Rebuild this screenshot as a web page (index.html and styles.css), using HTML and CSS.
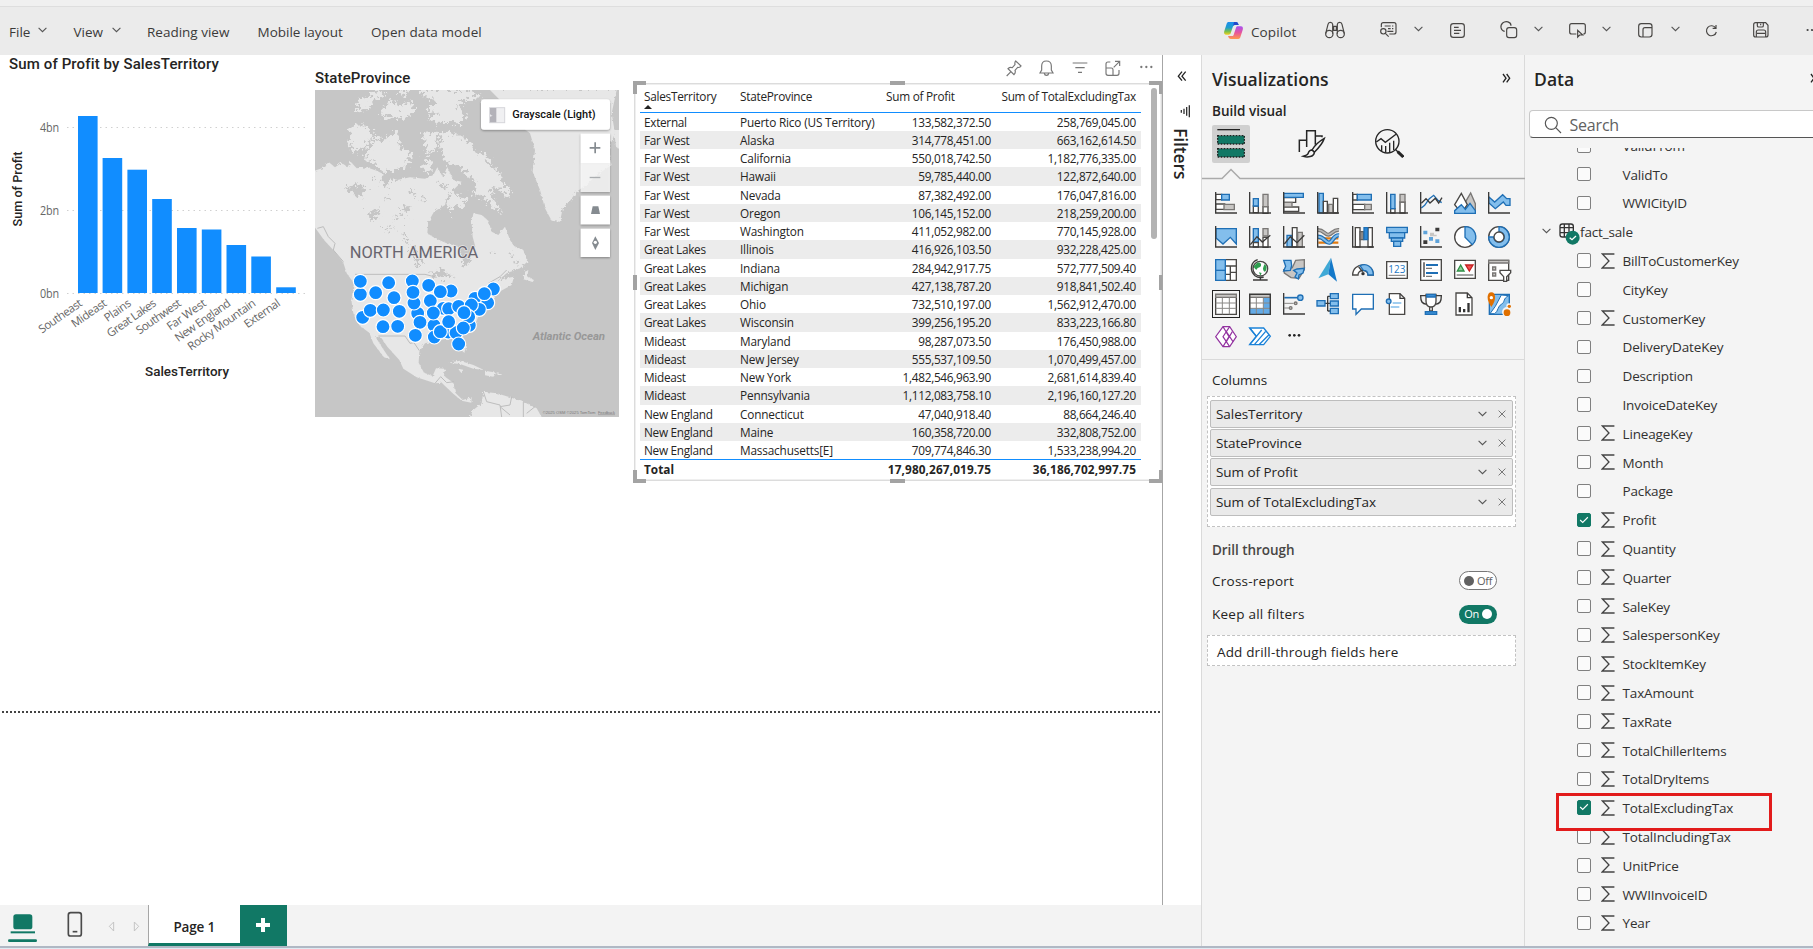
FILE: index.html
```html
<!DOCTYPE html>
<html lang="en">
<head>
<meta charset="utf-8">
<title>Report editor</title>
<link rel="stylesheet" href="styles.css">
</head>
<body>
<svg class="defs" width="0" height="0" aria-hidden="true">
  <symbol id="chev" viewBox="0 0 9 6"><path d="M.6.8 4.5 4.7 8.4.8" fill="none" stroke="#555" stroke-width="1.1"/></symbol>
  <symbol id="close" viewBox="0 0 8 8"><path d="M.6.6 7.4 7.4M7.4.6.6 7.4" stroke="#777" stroke-width="1" fill="none"/></symbol>
  <symbol id="sigma" viewBox="0 0 14 16"><path d="M13.4 1H1.4L8 8 1.2 15h12.4" fill="none" stroke="#444" stroke-width="1.3"/></symbol>
  <symbol id="tick" viewBox="0 0 14 14"><path d="M2.5 7 5.5 9.8 11.5 3.8" fill="none" stroke="#fff" stroke-width="1.3"/></symbol>
</svg>

<header class="toolbar">
  <nav class="menus">
    <span class="m-file">File</span><svg class="chev"><use href="#chev"/></svg>
    <span class="m-view">View</span><svg class="chev"><use href="#chev"/></svg>
    <span class="m-read">Reading view</span>
    <span class="m-mobile">Mobile layout</span>
    <span class="m-model">Open data model</span>
  </nav>
  <div class="tools">
    <svg width="19" height="19" viewBox="0 0 57 57">
      <defs>
        <linearGradient id="cpA" x1="0" y1="0" x2="0" y2="1"><stop offset="0" stop-color="#1b8df0"/><stop offset=".45" stop-color="#1f9ecb"/><stop offset=".75" stop-color="#7cc04b"/><stop offset="1" stop-color="#f3d020"/></linearGradient>
        <linearGradient id="cpB" x1="0" y1="0" x2="0" y2="1"><stop offset="0" stop-color="#a850f0"/><stop offset=".5" stop-color="#e8559c"/><stop offset="1" stop-color="#ff9a4d"/></linearGradient>
      </defs>
      <path d="M14 3h22c5 0 6 3 8 9H33c-4 0-6 3-7 7l-6 18c-1 3-3 4-6 4H6C1 41-1 36 1 30L8 8c1-3 3-5 6-5z" fill="url(#cpA)"/>
      <path d="M43 54H21c-5 0-7-3-9-9h12c4 0 5-3 6-7l6-18c1-3 3-4 6-4h9c5 0 7 5 5 11l-7 22c-1 3-3 5-6 5z" fill="url(#cpB)"/>
      <path d="M30 3h6c5 0 6 3 8 9H33c-3 0-5 1-6 4z" fill="#2447c9"/>
    </svg>
    <span class="copilot">Copilot</span>
    <svg class="ln t-bino" width="20" height="18" viewBox="0 0 60 54"><circle cx="13" cy="39" r="11"/><circle cx="47" cy="39" r="11"/><path d="M2 38 9 10c1-8 13-8 14 0v28M58 38 51 10c-1-8-13-8-14 0v28M23 16h14M23 28h14M26 17v10M34 17v10"/></svg>
    <svg class="ln t-comment" width="17" height="16" viewBox="0 0 51 48"><path d="M4 16V8c0-4 2-6 6-6h32c4 0 6 2 6 6v22c0 4-2 6-6 6H28M14 12h18M36 12h4M24 20h8M36 20h4M22 28h18"/><circle cx="10" cy="28" r="8"/><path d="M16 34l10 10"/></svg>
    <svg class="chev t-c1"><use href="#chev"/></svg>
    <svg class="ln t-note" width="15" height="15" viewBox="0 0 45 45"><rect x="2" y="2" width="41" height="41" rx="8"/><path d="M12 13h14M12 22h21M12 31h16"/></svg>
    <svg class="ln t-shapes" width="18" height="18" viewBox="0 0 54 54"><path d="M14 31C2 29-1 14 8 6c9-8 25-4 25 8"/><rect x="20" y="20" width="30" height="30" rx="7"/></svg>
    <svg class="chev t-c2"><use href="#chev"/></svg>
    <svg class="ln t-cursor" width="17" height="15" viewBox="0 0 51 45"><path d="M22 33H8c-4 0-6-2-6-6V8c0-4 2-6 6-6h35c4 0 6 2 6 6v19c0 4-2 6-6 6M26 22v20l6-6h9z"/></svg>
    <svg class="chev t-c3"><use href="#chev"/></svg>
    <svg class="ln t-layout" width="15" height="15" viewBox="0 0 45 45"><rect x="2" y="2" width="40" height="40" rx="8"/><path d="M15 42V20c0-4 2-6 6-6h21"/></svg>
    <svg class="chev t-c4"><use href="#chev"/></svg>
    <svg class="ln t-refresh" width="12" height="13" viewBox="0 0 36 39"><path d="M32 12A15 15 0 1 0 34 24M33 3v10H23"/></svg>
    <svg class="ln t-save" width="16" height="16" viewBox="0 0 48 48"><path d="M8 2h30l7 8v29c0 4-2 6-6 6H8c-4 0-6-2-6-6V8c0-4 2-6 6-6zM13 2v9c0 3 1 4 4 4h10c3 0 4-1 4-4V2M10 45V30c0-4 2-6 6-6h16c4 0 6 2 6 6v15M12 34h24M23 5v5"/></svg>
    <svg class="t-dots" width="14" height="4" viewBox="0 0 14 4"><circle cx="1.6" cy="2" r="1.1"/><circle cx="6" cy="2" r="1.1"/><circle cx="10.4" cy="2" r="1.1"/></svg>
  </div>
</header>

<main class="work">
  <section class="stage">
    <div class="canvas">
      <div class="bar-visual">
        <h3 class="din t-bar">Sum of Profit by SalesTerritory</h3>
        <svg class="barchart" width="312" height="320" viewBox="0 74 312 320">
          <g stroke="#d0d0d0" stroke-width="1" stroke-dasharray="1.5 4"><path d="M67 127.5H306M67 210.5H306M67 293.5H306"/></g>
          <g fill="#118dff">
            <rect x="78" y="116" width="19.6" height="177"/><rect x="102.6" y="158" width="19.6" height="135"/><rect x="127.4" y="169.7" width="19.6" height="123.3"/><rect x="152.2" y="199" width="19.6" height="94"/><rect x="177" y="228" width="19.6" height="65"/><rect x="201.8" y="229.5" width="19.6" height="63.5"/><rect x="226.5" y="245" width="19.6" height="48"/><rect x="251.3" y="256.5" width="19.6" height="36.5"/><rect x="276.2" y="287.3" width="19.6" height="5.7"/>
          </g>
          <g class="tick" text-anchor="end"><text x="59" y="131.500" textLength="19" lengthAdjust="spacingAndGlyphs">4bn</text><text x="59" y="214.500" textLength="19" lengthAdjust="spacingAndGlyphs">2bn</text><text x="59" y="297.500" textLength="19" lengthAdjust="spacingAndGlyphs">0bn</text></g>
          <g class="cat" text-anchor="end">
            <text transform="translate(83 305) rotate(-35)" textLength="50">Southeast</text>
            <text transform="translate(107.500 305) rotate(-35)" textLength="40">Mideast</text>
            <text transform="translate(132 305) rotate(-35)" textLength="30">Plains</text>
            <text transform="translate(157 305) rotate(-35)" textLength="57">Great Lakes</text>
            <text transform="translate(182 305) rotate(-35)" textLength="52">Southwest</text>
            <text transform="translate(207 305) rotate(-35)" textLength="45">Far West</text>
            <text transform="translate(231.500 305) rotate(-35)" textLength="65">New England</text>
            <text transform="translate(256.500 305) rotate(-35)" textLength="80">Rocky Mountain</text>
            <text transform="translate(281 305) rotate(-35)" textLength="41">External</text>
          </g>
          <text class="axis" transform="translate(21.500 226.500) rotate(-90)" textLength="75" lengthAdjust="spacingAndGlyphs">Sum of Profit</text>
          <text class="axis" x="145" y="376" textLength="84" lengthAdjust="spacingAndGlyphs">SalesTerritory</text>
        </svg>
      </div>

      <div class="map-visual">
        <h3 class="din t-map">StateProvince</h3>
        <svg class="map" width="304" height="327" viewBox="15 30 912 981">
          <defs>
            <filter id="rough" x="-5%" y="-5%" width="110%" height="110%"><feTurbulence type="fractalNoise" baseFrequency=".12" numOctaves="3" seed="4"/><feDisplacementMap in="SourceGraphic" scale="11"/></filter>
            <filter id="rougher" x="-5%" y="-5%" width="110%" height="110%"><feTurbulence type="fractalNoise" baseFrequency=".09" numOctaves="3" seed="9" result="n"/><feDisplacementMap in="SourceGraphic" in2="n" scale="44" xChannelSelector="R" yChannelSelector="G"/></filter>
            <filter id="soft" x="-10%" y="-20%" width="120%" height="150%"><feDropShadow dx="0" dy="3" stdDeviation="3" flood-opacity=".35"/></filter>
          </defs>
          <rect x="15" y="30" width="912" height="981" fill="#c6c6c6"/>
          <g fill="#e7e7e7" filter="url(#rough)">
            <path d="M5 275 45 262 55 245 75 262 95 248 112 262 122 245 140 265 170 262 200 272 232 288 262 300 300 292 345 296 370 285 382 262 398 290 412 262 430 300 455 305 430 330 412 345 405 375 372 395 355 425 352 460 375 475 410 490 445 500 455 530 465 556 478 545 480 515 496 500 488 470 485 430 490 400 515 405 535 422 545 455 565 465 585 440 600 480 612 498 640 510 652 545 630 565 590 580 560 605 585 595 612 590 605 615 560 640 525 680 505 710 490 745 458 765 468 800 462 822 448 800 436 782 420 775 380 782 345 790 328 815 326 848 342 878 368 888 378 865 405 866 402 888 430 908 436 938 458 960 485 952 484 968 455 962 428 940 395 908 375 910 320 892 280 866 268 840 232 800 215 775 195 768 215 800 240 838 222 832 190 790 178 758 150 738 130 700 124 660 132 610 110 580 100 548 72 512 42 480 22 452 5 430z"/>
            <path d="M520 935 560 940 600 952 640 965 680 985 700 1020 475 1020 490 990 515 970z"/>
            <path d="M415 848 450 842 490 855 522 870 490 866 450 852zM525 872 560 878 550 890 525 886zM445 866l18 4-12 6zM560 880l18 2-12 5z"/>
            <path d="M540 30 920 30 905 100 915 160 895 210 905 255 860 285 835 310 800 335 780 362 758 385 750 425 725 422 705 385 690 330 668 275 675 210 660 160 620 130 590 80 560 50z"/>
            <path d="M645 575 655 570 652 590 672 600 668 606 640 598zM912 150l20 0 0 60-14-10z"/>
          </g>
          <g fill="#e7e7e7" filter="url(#rougher)">
            <path d="M122 138 158 136 190 158 185 178 152 205 138 222 118 200z"/>
            <path d="M170 210 188 190 182 175 220 180 262 150 272 200 305 220 290 262 250 268 232 292 190 250 165 238z"/>
            <path d="M388 160 420 155 450 170 480 185 492 215 530 225 545 258 572 280 570 300 606 330 590 350 560 320 535 330 560 365 576 400 545 380 520 350 485 340 500 305 470 285 440 250 410 255 395 215z"/>
            <path d="M330 30 470 30 520 52 470 60 440 78 465 105 455 130 380 128 350 118 390 98 350 92 380 60 340 52z"/>
            <path d="M135 92 150 60 185 45 205 30 225 48 190 60 180 85zM215 80 250 60 262 85 300 62 315 92 280 118 240 108 218 118z"/>
            <path d="M335 160 378 155 382 205 352 222zM345 240 365 235 365 280 338 270zM262 30l35 0-8 22zM408 345 438 338 470 360 460 380 432 378 418 405z"/>
          </g>
          <g fill="#c6c6c6" filter="url(#rougher)">
            <path d="M105 325 130 312 168 322 160 345 142 352 118 335zM170 398 215 385 205 402 190 420zM225 270 262 285 232 320 210 300zM270 390l30-12 4 6-28 14zM215 440l45 10-40-2zM285 460l12 28-6 4-12-26zM310 495l26 62-12 4-24-56zM355 580l36-12 40 20-38 6zM452 520l22 12-2 26-14-6zM545 515l14 2-6 10zM595 520l20 4-14 8zM610 545l18-4-6 10zM300 330l22 10-14 6zM330 360l20-6-4 14zM385 300l30 20-20 4zM225 350l14 4-8 8zM250 415l20-4-8 10zM180 300l10-8 6 8zM290 420l12-4-2 12z"/>
          </g>
          <g fill="none" stroke="#bdbdbd" stroke-width="3">
            <path d="M135 583H345L380 592M205 768H285L300 790 312 788 328 812M22 445 40 440 55 470 75 490 70 510 100 545M535 610 570 590 590 570M375 910 392 890 410 908 432 905M520 935 530 965 570 975 575 1011M605 950 600 975 570 980 600 1005M640 965 640 1011M675 980 650 1000"/>
          </g>
          <text class="na" x="119" y="533" textLength="386" lengthAdjust="spacingAndGlyphs">NORTH AMERICA</text>
          <text class="ao" x="668" y="779" textLength="217" lengthAdjust="spacingAndGlyphs">Atlantic Ocean</text>
          <g fill="#118dff" stroke="#fff" stroke-width="3.500">
            <circle cx="495" cy="655" r="21"/><circle cx="550" cy="627" r="21"/><circle cx="533" cy="668" r="21"/><circle cx="508" cy="688" r="21"/><circle cx="400" cy="685" r="21"/><circle cx="323" cy="700" r="21"/><circle cx="372" cy="736" r="21"/><circle cx="416" cy="686" r="21"/><circle cx="478" cy="736" r="21"/><circle cx="415" cy="756" r="21"/>
            <circle cx="151" cy="643" r="21"/><circle cx="151" cy="604" r="21"/><circle cx="197" cy="638" r="21"/><circle cx="236" cy="608" r="21"/><circle cx="252" cy="653" r="21"/><circle cx="158" cy="712" r="21"/><circle cx="181" cy="691" r="21"/><circle cx="220" cy="690" r="21"/><circle cx="268" cy="694" r="21"/><circle cx="219" cy="740" r="21"/><circle cx="263" cy="739" r="21"/>
            <circle cx="307" cy="603" r="21"/><circle cx="312" cy="669" r="21"/><circle cx="309" cy="637" r="21"/><circle cx="356" cy="616" r="21"/><circle cx="361" cy="662" r="21"/><circle cx="423" cy="633" r="21"/><circle cx="391" cy="635" r="21"/><circle cx="330" cy="727" r="21"/><circle cx="316" cy="766" r="21"/><circle cx="373" cy="771" r="21"/><circle cx="391" cy="755" r="21"/><circle cx="370" cy="699" r="21"/>
            <circle cx="446" cy="679" r="21"/><circle cx="484" cy="675" r="21"/><circle cx="476" cy="710" r="21"/><circle cx="462" cy="698" r="21"/><circle cx="438" cy="758" r="21"/><circle cx="460" cy="744" r="21"/><circle cx="416" cy="725" r="21"/><circle cx="523" cy="641" r="21"/><circle cx="446" cy="792" r="21"/>
          </g>
          <g filter="url(#soft)">
            <rect x="513" y="58" width="387" height="91" rx="9" fill="#fff"/>
            <rect x="812" y="161" width="88" height="88" fill="#fff"/>
            <rect x="812" y="249" width="88" height="87" fill="#fff" fill-opacity=".72"/>
            <rect x="812" y="347" width="88" height="86" fill="#fff"/>
            <rect x="812" y="446" width="88" height="85" fill="#fff"/>
          </g>
          <rect x="539" y="83" width="45" height="45" fill="#f0f0f2" stroke="#d6d6da" stroke-width="3"/><path d="M540 84h19v24c-8 2-14 0-19-6zM540 110c8-2 12-4 19-2v19h-19z" fill="#b3b2b9"/>
          <text class="gs" x="607" y="114" textLength="250" lengthAdjust="spacingAndGlyphs">Grayscale (Light)</text>
          <path d="M839 203.500h32M855.500 187v33" stroke="#858b90" stroke-width="5"/><path d="M839 292.500h32" stroke="#aaadb0" stroke-width="4"/>
          <path d="M848 379h17l5 23h-27z" fill="#858b90"/><path d="M856 469l11 20-11 21-10-21z" fill="#858b90"/><circle cx="856" cy="487" r="5" fill="#fff"/>
          <text class="cr" x="698" y="1001" textLength="158" lengthAdjust="spacingAndGlyphs">©2025 OSM ©2025 TomTom<tspan class="fb"></tspan></text><text class="cr fb" x="864" y="1001" textLength="51" lengthAdjust="spacingAndGlyphs">Feedback</text>
        </svg>
      </div>

      <div class="table-visual">
        <div class="vis-head">
          <svg width="16" height="17" viewBox="0 0 48 51"><path d="M29 3 45 18c-2 4-6 5-10 4l-8 9c2 5 1 9-3 13L6 26c4-4 8-5 13-3l8-9c-1-5-1-8 2-11zM15 35 2 48"/></svg>
          <svg width="15" height="17" viewBox="0 0 45 51"><path d="M22 3c10 0 15 7 15 15v12l5 9H3l5-9V18C8 10 13 3 22 3zM16 40c1 8 12 8 13 0"/></svg>
          <svg width="16" height="17" viewBox="0 0 48 51"><path d="M2 9h44M10 23h28M18 37h12" /></svg>
          <svg width="16" height="17" viewBox="0 0 48 51"><path d="M16 6H9C5 6 3 8 3 12v28c0 4 2 6 6 6h27c4 0 6-2 6-6V30M3 24h16c4 0 5 1 5 5v17M26 22 44 4M30 4h14v14"/></svg>
          <svg width="15" height="17" viewBox="0 0 45 51"><g fill="#777" stroke="none"><circle cx="7" cy="21" r="3.500"/><circle cx="22" cy="21" r="3.500"/><circle cx="37" cy="21" r="3.500"/></g></svg>
        </div>
        <div class="frame">
          <table>
            <colgroup><col class="c1"><col class="c2"><col class="c3"><col class="c4"></colgroup>
            <thead><tr><th>SalesTerritory<i class="sort"></i></th><th>StateProvince</th><th>Sum of Profit</th><th>Sum of TotalExcludingTax</th></tr></thead>
            <tbody>
            <tr><td>External</td><td>Puerto Rico (US Territory)</td><td>133,582,372.50</td><td>258,769,045.00</td></tr>
            <tr><td>Far West</td><td>Alaska</td><td>314,778,451.00</td><td>663,162,614.50</td></tr>
            <tr><td>Far West</td><td>California</td><td>550,018,742.50</td><td>1,182,776,335.00</td></tr>
            <tr><td>Far West</td><td>Hawaii</td><td>59,785,440.00</td><td>122,872,640.00</td></tr>
            <tr><td>Far West</td><td>Nevada</td><td>87,382,492.00</td><td>176,047,816.00</td></tr>
            <tr><td>Far West</td><td>Oregon</td><td>106,145,152.00</td><td>218,259,200.00</td></tr>
            <tr><td>Far West</td><td>Washington</td><td>411,052,982.00</td><td>770,145,928.00</td></tr>
            <tr><td>Great Lakes</td><td>Illinois</td><td>416,926,103.50</td><td>932,228,425.00</td></tr>
            <tr><td>Great Lakes</td><td>Indiana</td><td>284,942,917.75</td><td>572,777,509.40</td></tr>
            <tr><td>Great Lakes</td><td>Michigan</td><td>427,138,787.20</td><td>918,841,502.40</td></tr>
            <tr><td>Great Lakes</td><td>Ohio</td><td>732,510,197.00</td><td>1,562,912,470.00</td></tr>
            <tr><td>Great Lakes</td><td>Wisconsin</td><td>399,256,195.20</td><td>833,223,166.80</td></tr>
            <tr><td>Mideast</td><td>Maryland</td><td>98,287,073.50</td><td>176,450,988.00</td></tr>
            <tr><td>Mideast</td><td>New Jersey</td><td>555,537,109.50</td><td>1,070,499,457.00</td></tr>
            <tr><td>Mideast</td><td>New York</td><td>1,482,546,963.90</td><td>2,681,614,839.40</td></tr>
            <tr><td>Mideast</td><td>Pennsylvania</td><td>1,112,083,758.10</td><td>2,196,160,127.20</td></tr>
            <tr><td>New England</td><td>Connecticut</td><td>47,040,918.40</td><td>88,664,246.40</td></tr>
            <tr><td>New England</td><td>Maine</td><td>160,358,720.00</td><td>332,808,752.00</td></tr>
            <tr><td>New England</td><td>Massachusetts[E]</td><td>709,774,846.30</td><td>1,533,238,994.20</td></tr>
            </tbody>
            <tfoot><tr><td>Total</td><td></td><td>17,980,267,019.75</td><td>36,186,702,997.75</td></tr></tfoot>
          </table>
          <div class="scroll"></div>
          <i class="h tl"></i><i class="h tr"></i><i class="h bl"></i><i class="h br"></i><i class="h tm"></i><i class="h bm"></i><i class="h ml"></i><i class="h mr"></i>
        </div>
      </div>
      <div class="page-end"></div>
    </div>
    <aside class="filters">
      <svg class="f-open" width="11" height="11" viewBox="0 0 33 33"><path d="M15 2 4 15.500 15 29M26 2 15 15.500 26 29" fill="none" stroke="#222" stroke-width="4"/></svg>
      <svg class="f-icon" width="11" height="13" viewBox="0 0 33 39"><path d="M4 15v8M12 11v16M20 6v26M28 1v36" stroke="#333" stroke-width="4"/></svg>
      <span>Filters</span>
    </aside>
    <footer class="pages">
      <svg class="p-laptop" width="30" height="41" viewBox="0 0 90 123"><rect x="16" y="28" width="57" height="45" rx="8" fill="#117865"/><path d="M8 82h73" stroke="#117865" stroke-width="6"/><path d="M4 107h79" stroke="#117865" stroke-width="8" stroke-linecap="round"/></svg>
      <svg class="p-phone" width="16" height="27" viewBox="0 0 48 81"><rect x="4" y="5" width="39" height="70" rx="7" fill="none" stroke="#4a4a4a" stroke-width="5"/><path d="M17 62h14" stroke="#4a4a4a" stroke-width="5"/></svg>
      <svg class="p-prev" width="7" height="11" viewBox="0 0 21 33"><path d="M17 3v27L4 16z" fill="none" stroke="#c4c4c4" stroke-width="3"/></svg>
      <svg class="p-next" width="7" height="11" viewBox="0 0 21 33"><path d="M4 3v27l13-14z" fill="none" stroke="#c4c4c4" stroke-width="3"/></svg>
      <div class="page-tab">Page 1</div>
      <div class="page-add"><svg width="14" height="14" viewBox="0 0 14 14"><path d="M7 0v14M0 7h14" stroke="#fff" stroke-width="4"/></svg></div>
    </footer>
  </section>

  <section class="viz">
    <div class="pane-title"><h2>Visualizations</h2><svg width="11" height="11" viewBox="0 0 33 33"><path d="M6 3 15 15.500 6 28M17 3 26 15.500 17 28" fill="none" stroke="#222" stroke-width="4"/></svg></div>
    <h4>Build visual</h4>
    <div class="viz-tabs">
      <div class="vt on"><svg width="38" height="38" viewBox="0 0 114 114"><path d="M16 14h68" stroke="#222" stroke-width="4"/><g fill="#117865" stroke="#222" stroke-width="4" stroke-dasharray="5 4"><rect x="17" y="32" width="80" height="25"/><rect x="17" y="71" width="80" height="25"/></g></svg></div>
      <svg class="vt-brush" width="28" height="30" viewBox="0 0 84 90"><g fill="none" stroke="#252525" stroke-width="4.500"><path d="M4 72V37h22M26 57V8h26v42M52 24h20v4"/><path d="M79 31C60 42 48 55 42 66l7 7C60 62 74 47 79 31z" fill="#f4f4f4"/><path d="M42 66c-8 0-10 5-12 11-1 4-6 6-14 8 12 4 32 2 33-12z" fill="#f4f4f4"/></g></svg>
      <svg class="vt-lens" width="30" height="30" viewBox="0 0 90 90"><g fill="none" stroke="#252525" stroke-width="4"><circle cx="40" cy="40" r="35"/><path d="M7 42 21 32l13 11 32-24M23 70V52M35 72V54M47 72V44M59 66V38"/><path d="M64 64 74 74"/><path d="M71 71 88 87" stroke-width="9"/></g></svg>
    </div>
    <svg class="rule" width="323" height="12" viewBox="0 0 323 12"><path d="M0 10.500H20L29 1.500 38 10.500H323" fill="none" stroke="#aaa" stroke-width="1.500"/></svg>

    <div class="gallery">
      <!-- bars and lines -->
      <svg viewBox="0 0 66 66"><path class="w" d="M2 7h18v16H2zM2 36h27v16H2z"/><path class="b" d="M20 7h23v17H20z"/><path class="g" d="M27 37h31v16H27z"/><path class="ax" d="M2 0v63h64"/></svg>
      <svg viewBox="0 0 66 66"><path class="w" d="M13 42h15v20H13zM42 44h15v20H42z"/><path class="b" d="M13 20h15v22H13z"/><path class="g" d="M42 7h15v37H42z"/><path class="ax" d="M2 0v63h64"/></svg>
      <svg viewBox="0 0 66 66"><path class="w" d="M2 17h36v14H2zM2 45h45v13H2z"/><path class="g" d="M2 31h25v14H2z"/><path class="b" d="M2 4h59v12H2z"/><path class="ax" d="M2 0v63h64"/></svg>
      <svg viewBox="0 0 66 66"><path class="b" d="M6 4h13v59H6z"/><path class="w" d="M19 28h12v35H19zM49 19h13v44H49z"/><path class="g" d="M35 37h12v26H35z"/><path class="ax" d="M2 0v63h64"/></svg>
      <svg viewBox="0 0 66 66"><path class="w" d="M2 7h14v17H2zM2 37h36v16H2z"/><path class="b" d="M16 7h42v17H16z"/><path class="g" d="M38 37h20v16H38z"/><path class="ax" d="M2 0v63h64"/></svg>
      <svg viewBox="0 0 66 66"><path class="w" d="M14 50h13v13H14zM42 30h15v33H42z"/><path class="b" d="M14 7h13v43H14z"/><path class="g" d="M42 7h15v23H42z"/><path class="ax" d="M2 0v63h64"/></svg>
      <svg viewBox="0 0 66 66"><path class="bl" d="M4 48 14 40 28 20l13-10 12 14 12 8"/><path class="kl" d="M4 34 18 20l12 13 16-14 10 14L66 17"/><path class="ax" d="M2 0v63h64"/></svg>
      <svg viewBox="0 0 66 66"><path class="g" d="M32 34 50 3l14 32v28H36z"/><path class="w" d="M2 38 22 4l18 34-18 25z"/><path class="b" d="M2 64V56l20-18 12 14 14-18 16 22v8z"/></svg>
      <svg viewBox="0 0 66 66"><path class="b" d="M2 14 20 30 44 8 56 20H66V40H54L46 30 22 50 2 32z"/><path class="ax" d="M2 0v63h64"/></svg>
      <!-- areas and combos -->
      <svg viewBox="0 0 66 66"><path class="b" d="M3 8h61v46L46 34 24 54 3 36z"/><path class="ax" d="M2 0v63h64"/></svg>
      <svg viewBox="0 0 66 66"><path class="b" d="M13 8h15v40H13z"/><path class="g" d="M42 8h15v22H42z"/><path class="w" d="M42 34h15v30H42zM13 50h15v13H13z"/><path class="kl" d="M4 56 24 32l16 16L64 28"/><path class="ax" d="M2 0v63h64"/></svg>
      <svg viewBox="0 0 66 66"><path class="b" d="M12 28h14v35H12z"/><path class="w" d="M28 5h14v58H28z"/><path class="g" d="M44 19h14v44H44z"/><path class="kl" d="M4 54 22 32l20 18L64 28"/><path class="ax" d="M2 0v63h64"/></svg>
      <svg viewBox="0 0 66 66"><path d="M4 37h60M4 50h60" stroke="#e07a10" stroke-width="7"/><path d="M3 12c18 0 22 16 32 14S50 10 66 12" fill="none" stroke="#797775" stroke-width="12"/><path d="M3 12c18 0 22 16 32 14S50 10 66 12" fill="none" stroke="#b8b6b4" stroke-width="5"/><path d="M3 32c18 0 24 20 34 18S50 26 66 28" fill="none" stroke="#1f6fb5" stroke-width="13"/><path d="M3 32c18 0 24 20 34 18S50 26 66 28" fill="none" stroke="#83beec" stroke-width="6"/><path class="ax" d="M2 0v63h64"/></svg>
      <svg viewBox="0 0 66 66"><path class="w" d="M10 5h14v58H10zM48 5h13v58H48z"/><path class="gd" d="M24 17h11v24H24z"/><path class="b" d="M36 5h11v36H36z" style="fill:#2b88d8"/><path class="ax" d="M2 0v63h64"/></svg>
      <svg viewBox="0 0 66 66"><g class="b"><path d="M2 4h62v16H2z"/><path d="M10 20h46v16H10z"/><path d="M16 36h34v10H16z"/><path d="M23 46h21v15H23z"/></g></svg>
      <svg viewBox="0 0 66 66"><path d="M46 5h12v11H46zM10 43h12v11H10z" fill="#3b3a39"/><path d="M10 14h12v11H10zM27 33h12v11H27zM46 40h12v11H46z" fill="#5ea3da"/><path d="M30 20h12v11H30zM40 26h10v5H40z" fill="#c8c6c4"/><path class="ax" d="M2 0v63h64"/></svg>
      <svg viewBox="0 0 66 66"><circle class="w" cx="33" cy="33" r="31"/><path class="b" d="M33 2v32l22 22A31 31 0 0 0 33 2z"/></svg>
      <svg viewBox="0 0 66 66"><circle class="w" cx="33" cy="33" r="31"/><path class="b" d="M33 2a31 31 0 1 1-31 31h15A16 16 0 1 0 33 17z"/><circle cx="33" cy="33" r="15" class="w"/></svg>
      <!-- maps, cards, slicer -->
      <svg viewBox="0 0 66 66"><path class="w" d="M31 2h33v62H31zM31 21h33M46 21v43M31 46h15M46 40h18"/><path class="b" d="M2 2h29v62H2z"/><path class="bl" d="M2 34h29"/></svg>
      <svg viewBox="0 0 66 66"><circle class="w" cx="34" cy="29" r="22"/><path d="M24 12c8-4 14 2 12 8s-10 4-12 10-8-2-10-8zM46 16c8 4 8 14 4 20s-8-2-8-8zM30 40l8 2-4 8z" fill="#2f9e4f"/><path d="M26 2C6 8 0 34 18 50c8 6 16 7 26 4M34 54v8M12 63h44" class="kl"/></svg>
      <svg viewBox="0 0 66 66"><path class="g" d="M2 32 28 26 38 4l26-2v30L48 58 24 56 4 42z"/><path class="b" d="M2 4h22l2 16-4 14L2 36 8 22zM32 34 42 30 64 28 60 42 48 48 46 60 36 54 42 42z"/></svg>
      <svg viewBox="0 0 66 66"><path d="M42-4 4 58 34 46z" fill="#3fa9d6"/><path d="M42-4 34 46 60 68z" fill="#1479c9"/></svg>
      <svg viewBox="0 0 66 66"><path class="w" d="M2 48C2 8 64 8 64 48H48c0-18-30-18-30 0z"/><path class="b" d="M24 20c20-9 40 4 40 28H48c0-10-6-14-14-14z"/><path d="M20 24l12 14" class="kl"/><circle cx="33" cy="44" r="5" fill="#333"/></svg>
      <svg viewBox="0 0 66 66"><path class="w" d="M2 8h62v50H2z"/><path d="M8 49h50" class="kl" style="stroke-width:3;stroke:#777"/><text class="num" x="7" y="41" textLength="51" lengthAdjust="spacingAndGlyphs">123</text></svg>
      <svg viewBox="0 0 66 66"><path class="w" d="M2 2h62v62H2z"/><path d="M12 10v44" class="kl"/><path d="M18 18h36M18 42h36" stroke="#1f6fb5" stroke-width="6"/><path d="M18 28h18M18 52h18" stroke="#777" stroke-width="4"/></svg>
      <svg viewBox="0 0 66 66"><path class="w" d="M2 4h62v54H2z"/><path d="M10 36 20 18 30 36z" fill="#8fd09c" stroke="#2f8f45" stroke-width="4"/><path d="M35 18h22L46 36z" fill="#ee5050" stroke="#c42020" stroke-width="4"/><path d="M8 48h50" stroke="#777" stroke-width="4"/></svg>
      <svg viewBox="0 0 66 66"><path class="w" d="M2 4h60v60H2z"/><path class="g" d="M2 4h60v8H2z"/><path class="g" d="M14 24h9v9h-9zM14 42h9v9h-9z"/><path class="w" d="M36 34h32v7L56 53v14H47V53L36 41z"/></svg>
      <!-- tables and AI visuals -->
      <svg class="sel" viewBox="0 0 66 66"><path class="w" d="M2 4h62v60H2z"/><path class="g" d="M2 4h62v9H2z"/><path class="grid" d="M2 30h62M2 46h62M22 14v50M43 14v50"/></svg>
      <svg viewBox="0 0 66 66"><path class="w" d="M2 4h62v60H2z"/><path d="M43 14h21v50H2V46h41z" fill="#63aae6"/><path class="g" d="M2 4h62v9H2z"/><path class="grid" d="M2 30h62M2 46h62M22 14v50M43 14v50"/><path class="kl" d="M2 4h62v60H2z"/></svg>
      <svg viewBox="0 0 66 66"><path d="M4 14h42" stroke="#1f6fb5" stroke-width="5"/><circle cx="52" cy="14" r="8" class="b"/><path d="M4 31h28M4 45h14" class="grid"/><circle cx="38" cy="31" r="4" class="g"/><circle cx="23" cy="45" r="4" class="g"/><path class="ax" d="M2 0v63h64"/></svg>
      <svg viewBox="0 0 66 66"><path d="M24 31h16M32 10v44M32 10h8M32 54h8" class="kl"/><g class="b"><path d="M0 23h24v16H0zM40 2h24v15H40zM40 24h24v15H40zM40 46h24v16H40z"/></g></svg>
      <svg viewBox="0 0 66 66"><path class="w" d="M2 4h62v44H28L12 64V48H2z" style="stroke:#1f6fb5"/></svg>
      <svg viewBox="0 0 66 66"><path class="w" d="M10 2h32l14 14v48H10z"/><path d="M42 2v14h14" class="kl"/><circle cx="8" cy="25" r="7" class="b"/><path d="M20 30h26M14 42h26" stroke="#83beec" stroke-width="5"/></svg>
      <svg viewBox="0 0 66 66"><path d="M18 8H2c0 18 4 24 18 26M48 8h16c0 18-4 24-18 26" class="kl"/><path class="w" d="M18 4h30v20c0 12-6 18-15 18s-15-6-15-18zM29 42h8v12h-8z"/><path d="M20 4h26v8H20zM16 56h34v8H16z" class="b" style="fill:#3d8fd6"/></svg>
      <svg viewBox="0 0 66 66"><path class="w" d="M6 0h34l14 14v52H6z"/><path d="M40 0v14h14" class="kl"/><path d="M14 42h7v16h-7zM27 48h7v10h-7zM40 30h7v28h-7z" fill="#333"/></svg>
      <svg viewBox="0 0 66 66"><path d="M18 4h46v60H4V28" fill="#83beec" stroke="#1f6fb5" stroke-width="4"/><path d="M62 8C44 16 52 28 40 34S32 54 20 62H6L22 40 40 6z" fill="#fff" stroke="#1f6fb5" stroke-width="3"/><path d="M10 42C-6 22-4-2 10-2s16 24 0 44z" fill="#e07000"/><circle cx="10" cy="14" r="5" fill="#fff"/><circle cx="57" cy="57" r="15" fill="#f4f4f4"/><circle cx="57" cy="59" r="10" fill="#e07000"/><circle cx="63" cy="39" r="8" fill="#f4f4f4"/><circle cx="64" cy="40" r="5" fill="#e07000"/></svg>
      <!-- apps -->
      <svg viewBox="0 0 66 66"><g fill="#fff" stroke="#9332a0" stroke-width="3.500"><path d="M24 2h20l20 30-20 30H24L2 32z"/><path d="M24 2 42 32 24 62M44 2 24 32 44 62M34 17 44 2M52 17 34 47M34 17 54 47" fill="none"/></g></svg>
      <svg viewBox="0 0 66 66"><g fill="#fff" stroke="#1b82d8" stroke-width="4"><path d="M2 6h42l20 25-20 25H2l20-25z"/><path d="M2 56 38 12M16 56 50 16M30 56 60 26M2 6 22 31" fill="none"/></g></svg>
      <svg viewBox="0 0 66 66"><g fill="#222"><circle cx="20" cy="28" r="4"/><circle cx="34" cy="28" r="4"/><circle cx="48" cy="28" r="4"/></g></svg>
    </div>

    <div class="wells">
      <div class="label">Columns</div>
      <div class="drop">
        <div class="pill"><span>SalesTerritory</span><svg class="chev"><use href="#chev"/></svg><svg class="x"><use href="#close"/></svg></div>
        <div class="pill"><span>StateProvince</span><svg class="chev"><use href="#chev"/></svg><svg class="x"><use href="#close"/></svg></div>
        <div class="pill"><span>Sum of Profit</span><svg class="chev"><use href="#chev"/></svg><svg class="x"><use href="#close"/></svg></div>
        <div class="pill"><span>Sum of TotalExcludingTax</span><svg class="chev"><use href="#chev"/></svg><svg class="x"><use href="#close"/></svg></div>
      </div>
      <div class="label strong">Drill through</div>
      <div class="opt"><span>Cross-report</span><div class="toggle off"><i></i>Off</div></div>
      <div class="opt"><span>Keep all filters</span><div class="toggle">On<i></i></div></div>
      <div class="drop drill">Add drill-through fields here</div>
    </div>
  </section>

  <section class="data">
    <div class="pane-title"><h2>Data</h2><svg width="11" height="11" viewBox="0 0 33 33"><path d="M6 3 15 15.500 6 28M17 3 26 15.500 17 28" fill="none" stroke="#222" stroke-width="4"/></svg></div>
    <div class="search"><svg width="18" height="18" viewBox="0 0 54 54"><circle cx="22" cy="22" r="18" fill="none" stroke="#555" stroke-width="3.500"/><path d="M35 35 51 51" stroke="#555" stroke-width="3.500"/></svg>Search</div>
    <div class="tree">
      <div class="row"><i class="box"></i><s></s>ValidFrom</div>
      <div class="row"><i class="box"></i><s></s>ValidTo</div>
      <div class="row"><i class="box"></i><s></s>WWICityID</div>
      <div class="row head"><svg class="chev"><use href="#chev"/></svg><svg class="tbl" width="21" height="22" viewBox="0 0 63 66"><rect x="3" y="3" width="40" height="39" rx="7" fill="none" stroke="#333" stroke-width="4"/><path d="M16 3v39M30 3v39M3 14h40M3 29h40" stroke="#333" stroke-width="4"/><circle cx="41" cy="44" r="21" fill="#117865"/><path d="M32 44l7 6 12-11" fill="none" stroke="#fff" stroke-width="4"/></svg>fact_sale</div>
      <div class="row"><i class="box"></i><svg class="sg"><use href="#sigma"/></svg>BillToCustomerKey</div>
      <div class="row"><i class="box"></i><s></s>CityKey</div>
      <div class="row"><i class="box"></i><svg class="sg"><use href="#sigma"/></svg>CustomerKey</div>
      <div class="row"><i class="box"></i><s></s>DeliveryDateKey</div>
      <div class="row"><i class="box"></i><s></s>Description</div>
      <div class="row"><i class="box"></i><s></s>InvoiceDateKey</div>
      <div class="row"><i class="box"></i><svg class="sg"><use href="#sigma"/></svg>LineageKey</div>
      <div class="row"><i class="box"></i><svg class="sg"><use href="#sigma"/></svg>Month</div>
      <div class="row"><i class="box"></i><s></s>Package</div>
      <div class="row"><i class="box on"><svg><use href="#tick"/></svg></i><svg class="sg"><use href="#sigma"/></svg>Profit</div>
      <div class="row"><i class="box"></i><svg class="sg"><use href="#sigma"/></svg>Quantity</div>
      <div class="row"><i class="box"></i><svg class="sg"><use href="#sigma"/></svg>Quarter</div>
      <div class="row"><i class="box"></i><svg class="sg"><use href="#sigma"/></svg>SaleKey</div>
      <div class="row"><i class="box"></i><svg class="sg"><use href="#sigma"/></svg>SalespersonKey</div>
      <div class="row"><i class="box"></i><svg class="sg"><use href="#sigma"/></svg>StockItemKey</div>
      <div class="row"><i class="box"></i><svg class="sg"><use href="#sigma"/></svg>TaxAmount</div>
      <div class="row"><i class="box"></i><svg class="sg"><use href="#sigma"/></svg>TaxRate</div>
      <div class="row"><i class="box"></i><svg class="sg"><use href="#sigma"/></svg>TotalChillerItems</div>
      <div class="row"><i class="box"></i><svg class="sg"><use href="#sigma"/></svg>TotalDryItems</div>
      <div class="row marked"><i class="box on"><svg><use href="#tick"/></svg></i><svg class="sg"><use href="#sigma"/></svg>TotalExcludingTax<b class="callout"></b></div>
      <div class="row"><i class="box"></i><svg class="sg"><use href="#sigma"/></svg>TotalIncludingTax</div>
      <div class="row"><i class="box"></i><svg class="sg"><use href="#sigma"/></svg>UnitPrice</div>
      <div class="row"><i class="box"></i><svg class="sg"><use href="#sigma"/></svg>WWIInvoiceID</div>
      <div class="row"><i class="box"></i><svg class="sg"><use href="#sigma"/></svg>Year</div>
    </div>
  </section>
</main>
<div class="window-edge"></div>
</body>
</html>
```

FILE: styles.css
```css
* { box-sizing: border-box; }
body {
  margin: 0;
  width: 1813px;
  height: 949px;
  overflow: hidden;
  display: flex;
  flex-direction: column;
  background: #f4f4f4;
  color: #252423;
  font: 13.5px/20px "Open Sans", "Noto Sans", sans-serif;
  letter-spacing: -0.15px;
}
h2, h3, h4 { margin: 0; font-weight: 600; }
svg { display: block; flex: none; }
.defs { position: absolute; }
.chev { width: 9px; height: 6px; }

/* top toolbar */
.toolbar {
  flex: none;
  height: 55px;
  display: flex;
  border-top: 6px solid #f0f0f0;
  background: #ebebeb;
  box-shadow: inset 0 1px #dedede;
  color: #3b3a39;
  white-space: nowrap;
}
.menus { width: 1224px; flex: none; display: flex; align-items: center; padding-left: 9px; padding-top: 3px; letter-spacing: 0; }
.menus .chev { margin-top: -5px; }
.m-file { width: 29px; }
.m-view { width: 38px; margin-left: 26.500px; }
.m-read { width: 84px; margin-left: 26.500px; }
.m-mobile { width: 88px; margin-left: 26.500px; }
.m-model { margin-left: 25.500px; letter-spacing: 0.08px; }
.tools { display: flex; align-items: center; }
.tools > svg { margin-top: -1px; }
.tools .chev { margin-top: -3px; }
.ln { fill: none; stroke: #484644; stroke-width: 3.5; overflow: visible; }
.copilot { width: 46px; margin: 3px 0 0 8px; letter-spacing: 0.1px; }
.t-bino { margin-left: 28px; }
.t-comment { margin-left: 35px; }
.t-c1 { margin-left: 17px; }
.t-note { margin-left: 27px; }
.t-shapes { margin-left: 35px; }
.t-c2 { margin-left: 16px; }
.t-cursor { margin-left: 26px; }
.t-c3 { margin-left: 16px; }
.t-layout { margin-left: 27px; }
.t-c4 { margin-left: 18px; }
.t-refresh { margin-left: 25px; }
.t-save { margin-left: 36px; }
.t-dots { margin-left: 37px; fill: #444; }

.work { flex: 1; min-height: 0; display: flex; }

/* report stage */
.stage { width: 1201px; flex: none; display: grid; grid-template-columns: 1163px 38px; grid-template-rows: 850px 41px; background: #fff; }
.canvas { display: grid; grid-template-columns: 315px 318px 1fr; grid-template-rows: 656px 3px; border-right: 1px solid #a6a6a6; overflow: hidden; }
.din { font-family: Roboto, "Liberation Sans", sans-serif; font-weight: 500; font-size: 15px; line-height: 18px; letter-spacing: 0.13px; color: #252423; white-space: nowrap; }
.t-bar { padding-left: 9px; height: 19px; }
.map-visual { padding-top: 14px; }
.t-map { height: 21px; }
.tick { font: 12px "Open Sans", sans-serif; fill: #666; }
.cat { font: 11.5px "Open Sans", sans-serif; fill: #666; }
.axis { font: 500 13.5px Roboto, sans-serif; fill: #252423; letter-spacing: 0; }
.na { font: 47px Roboto, sans-serif; fill: #68656f; stroke: #e7e7e7; stroke-width: 4; paint-order: stroke; letter-spacing: 0; }
.ao { font: italic 700 30px Roboto, sans-serif; fill: #989898; }
.gs { font: 500 32px Roboto, "Liberation Sans", sans-serif; fill: #111; letter-spacing: 0; }
.cr { font: 12px "Liberation Sans", sans-serif; fill: #777; letter-spacing: 0; }
.fb { text-decoration: underline; }

.vis-head { display: flex; padding: 5px 0 0 372.500px; height: 28px; gap: 17.500px; }
.vis-head svg { fill: none; stroke: #777; stroke-width: 3.5; }
.frame { position: relative; margin-left: 1px; width: 528px; height: 398px; border: 1px solid #dcdcdc; outline: 1px solid #efefef; outline-offset: -2px; padding: 0 0 0 5px; background: #fff; }
table { table-layout: fixed; width: 501px; border-collapse: collapse; font-size: 11.8px; line-height: 14px; letter-spacing: -0.3px; white-space: nowrap; }
.c1 { width: 96px; } .c2 { width: 146px; } .c3 { width: 114px; } .c4 { width: 145px; }
th { position: relative; height: 28.500px; padding: 0 5px 4px 4px; font-weight: 400; text-align: left; border-bottom: 1px solid #118dff; letter-spacing: -0.26px; }
th:nth-child(4) { text-align: right; padding-right: 5px; }
.sort { position: absolute; left: 4px; bottom: 3px; border: 4px solid transparent; border-top: 0; border-bottom-color: #222; }
td { height: 18.260px; padding: 0 5px 0 4px; }
td:nth-child(2) { letter-spacing: -0.17px; }
td:nth-child(n+3) { text-align: right; }
tbody tr:nth-child(even) { background: #ececec; }
tfoot td { height: 19px; font-weight: 700; border-top: 1px solid #118dff; letter-spacing: 0; }
tfoot td:nth-child(n+3) { letter-spacing: 0.12px; }
.scroll { position: absolute; left: 516px; top: 4px; width: 6px; height: 151px; border-radius: 3px; background: #b3b3b3; }
.h { position: absolute; background: #a3a3a3; }
.tl, .tr, .bl, .br { width: 13px; height: 13px; background: none; border: 0 solid #a3a3a3; }
.tl { left: -2px; top: -3px; border-width: 4px 0 0 4px; }
.tr { right: -1px; top: -3px; border-width: 4px 3px 0 0; }
.bl { left: -2px; bottom: -3px; border-width: 0 0 4px 4px; }
.br { right: -1px; bottom: -3px; border-width: 0 3px 4px 0; }
.tm, .bm { left: 255px; width: 15px; height: 4px; }
.tm { top: -3px; } .bm { bottom: -3px; }
.ml, .mr { top: 191px; width: 4px; height: 15px; }
.ml { left: -2px; } .mr { right: -1px; width: 3px; }
.page-end { grid-column: 1 / -1; margin: 0 2px; height: 2px; background: repeating-linear-gradient(90deg, #444 0 2px, #fff 2px 4px); }

.filters { display: flex; flex-direction: column; align-items: center; padding: 16px 0 0 0; }
.f-open { margin-left: 1px; }
.f-icon { margin: 23px 0 0 6px; }
.filters span { writing-mode: vertical-rl; margin: 10px 2px 0 0; font-size: 17.5px; font-weight: 600; line-height: 20px; letter-spacing: -0.1px; }

.pages { grid-column: 1 / -1; display: flex; background: #f3f3f3; }
.p-laptop { margin-left: 7.500px; }
.p-phone { margin: 6px 0 0 29px; }
.p-prev { margin: 16px 0 0 25.500px; }
.p-next { margin: 16px 0 0 17.500px; }
.page-tab { width: 92px; margin-left: 8px; padding-left: 25px; border-left: 1px solid #a6a6a6; border-bottom: 3px solid #117865; background: #fff; font-weight: 600; line-height: 44px; letter-spacing: -0.2px; }
.page-add { width: 47px; display: grid; place-items: center; padding-bottom: 1px; background: #117865; }

/* visualizations pane */
.viz { width: 324px; flex: none; border-left: 1px solid #dadada; border-right: 1px solid #dadada; }
.pane-title { display: flex; align-items: center; height: 47px; padding-left: 10px; }
h2 { font-size: 17.5px; line-height: 24px; letter-spacing: 0.05px; }
.viz .pane-title svg { margin-left: auto; margin-right: 12px; }
h4 { margin: 1px 0 0 10px; height: 22px; font-size: 13.5px; line-height: 17px; letter-spacing: 0; }
.viz-tabs { display: flex; height: 43px; padding-left: 10px; }
.vt.on { width: 38px; height: 38px; border-radius: 2px; background: #d0d0d0; }
.vt-brush { margin: 3px 0 0 48px; }
.vt-lens { margin: 3px 0 0 48px; }
.gallery { display: grid; grid-template-columns: repeat(9, 34.170px); grid-auto-rows: 33.600px; padding: 12px 0 0 13px; height: 180px; border-bottom: 1px solid #dadada; }
.gallery svg { width: 22px; height: 22px; overflow: visible; }
.gallery .sel { outline: 1px solid #222; outline-offset: 2.500px; }
.w { fill: #fff; stroke: #4a4846; stroke-width: 4; }
.b { fill: #83beec; stroke: #1f6fb5; stroke-width: 4; }
.g { fill: #c8c6c4; stroke: #797775; stroke-width: 4; }
.gd { fill: #8a8886; stroke: #605e5c; stroke-width: 4; }
.ax { fill: none; stroke: #3b3a39; stroke-width: 4; }
.kl { fill: none; stroke: #3b3a39; stroke-width: 4; }
.bl { fill: none; stroke: #1f6fb5; stroke-width: 4; }
.gallery .grid { fill: none; stroke: #8a8886; stroke-width: 3; }
.num { font: 30px "Open Sans", sans-serif; fill: #1f7ac4; letter-spacing: 0; }

.wells { padding-left: 5px; letter-spacing: -0.05px; }
.label { height: 36px; padding: 10px 0 0 5px; }
.drop { width: 309px; border: 1px dashed #c2c2c2; background: #fff; }
.wells .drop:nth-child(2) { height: 131px; padding: 3px 2px; display: grid; grid-auto-rows: 28px; row-gap: 1.200px; }
.pill { display: flex; align-items: center; width: 303px; height: 28px; padding: 0 6px 0 5px; border: 1px solid #bdbdbd; border-radius: 2px; background: #eaeaea; }
.pill .chev { margin-left: auto; }
.x { width: 8px; height: 8px; margin-left: 11px; }
.strong { height: 41px; padding-top: 13px; font-weight: 600; color: #484644; }
.opt { display: flex; justify-content: space-between; align-items: center; padding: 0 24px 0 5px; letter-spacing: 0.25px; }
.wells .opt { width: 314px; }
.wells .opt:nth-child(4) { height: 25px; }
.wells .opt:nth-child(5) { height: 42px; }
.toggle { width: 38px; height: 19px; display: flex; align-items: center; justify-content: center; gap: 3px; border-radius: 10px; background: #117865; color: #fff; font-size: 11px; letter-spacing: -0.3px; }
.toggle i { width: 10px; height: 10px; border-radius: 50%; background: #fff; }
.toggle.off { background: #fff; color: #616161; border: 1px solid #777; }
.toggle.off i { background: #616161; }
.drill { height: 31px; padding: 6px 9px; line-height: 20px; letter-spacing: 0.15px; }

/* data pane */
.data { flex: 1; min-width: 0; overflow: hidden; }
.data .pane-title { height: 47px; width: 300px; padding-left: 9px; }
.data .pane-title svg { margin-left: 235px; }
.search { display: flex; align-items: center; gap: 7.500px; width: 300px; height: 28px; margin: 8px 0 0 4px; padding: 1px 0 0 14px; border: 1px solid #c8c8c8; border-bottom: 1px solid #555; border-radius: 4px; background: #fff; color: #616161; font-size: 16px; letter-spacing: -0.2px; }
.tree { height: 798px; margin-top: 10px; overflow: hidden; color: #323130; letter-spacing: -0.15px; }
.row { display: flex; align-items: center; height: 28.810px; padding-left: 52px; white-space: nowrap; }
.row:first-child { margin-top: -16.500px; }
.box { position: relative; width: 14px; height: 14.500px; margin-top: -1px; border: 1px solid #808080; border-radius: 2px; background: #fbfbfb; flex: none; }
.box.on { background: #117865; border-color: #117865; }
.box svg { width: 12px; height: 12px; }
.row s { width: 31.500px; }
.sg { width: 14px; height: 16px; margin: -1px 7.500px 0 10px; }
.head { padding-left: 17px; }
.head .chev { margin-top: -2px; }
.tbl { margin: 4px 0 0 8px; }
.marked { position: relative; }
.callout { position: absolute; left: 31px; top: -1px; width: 216px; height: 38px; border: 3px solid #e21b1b; z-index: 1; }

.window-edge { flex: none; height: 3px; background: linear-gradient(#b0b8c4 0 2px, #dfeaf2 2px); }
```
